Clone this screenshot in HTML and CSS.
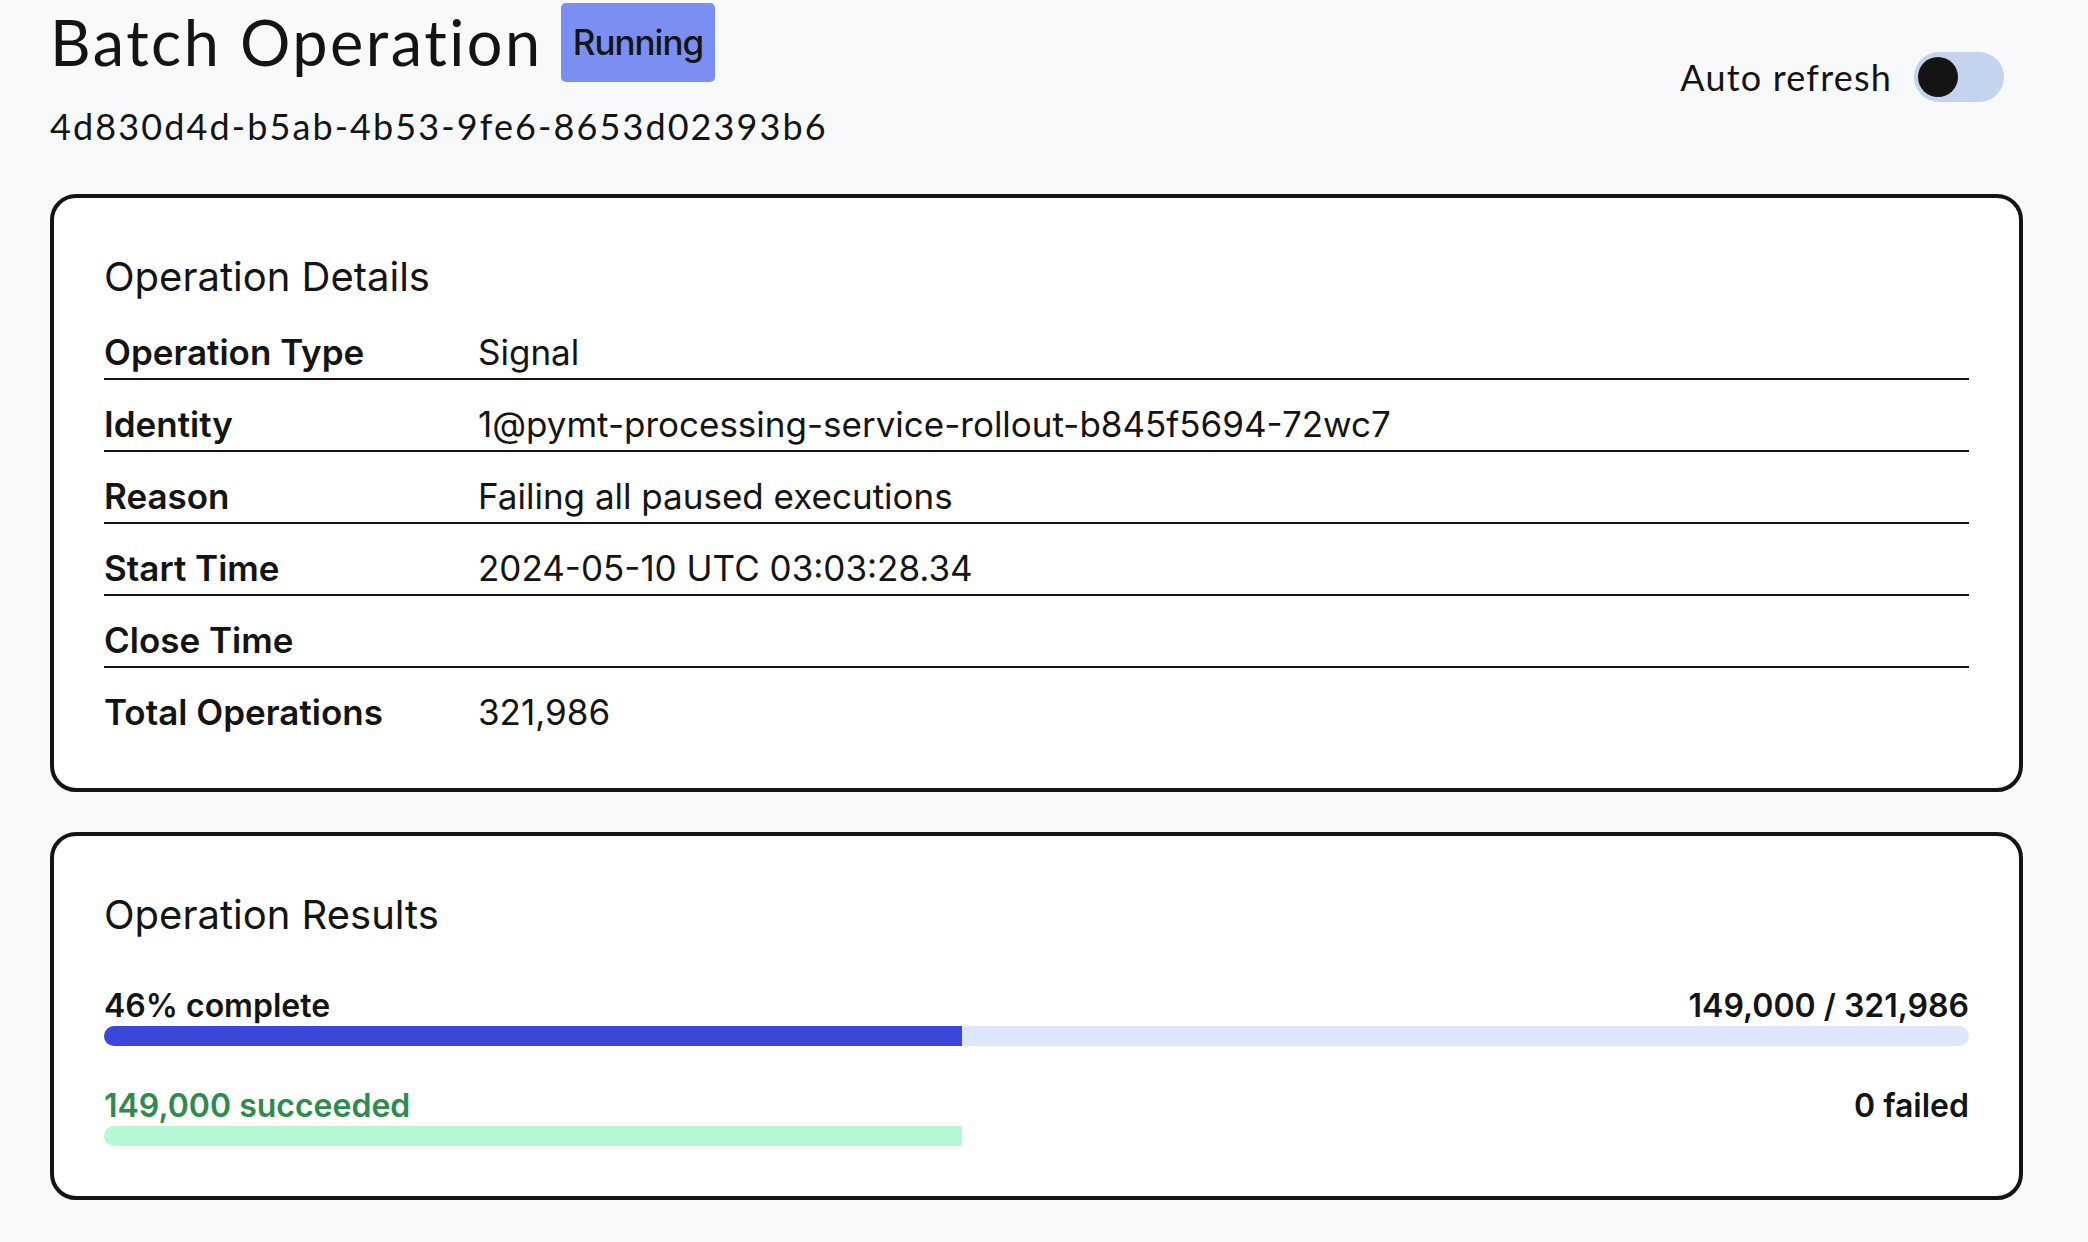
FILE: index.html
```html
<!DOCTYPE html>
<html lang="en">
<head>
<meta charset="utf-8">
<title>Batch Operation</title>
<link rel="stylesheet" href="styles.css">
</head>
<body>
<div class="page">
  <header class="header">
    <div class="header-main">
      <div class="title-row">
        <h1 class="title">Batch Operation</h1>
        <span class="badge">Running</span>
      </div>
      <div class="op-id">4d830d4d-b5ab-4b53-9fe6-8653d02393b6</div>
    </div>
    <div class="refresh">
      <span class="refresh-label">Auto refresh</span>
      <span class="toggle" role="switch" aria-checked="false"><span class="knob"></span></span>
    </div>
  </header>

  <section class="card">
    <h2 class="card-title">Operation Details</h2>
    <div class="details">
      <div class="row"><div class="key">Operation Type</div><div class="val">Signal</div></div>
      <div class="row"><div class="key">Identity</div><div class="val">1@pymt-processing-service-rollout-b845f5694-72wc7</div></div>
      <div class="row"><div class="key">Reason</div><div class="val">Failing all paused executions</div></div>
      <div class="row"><div class="key">Start Time</div><div class="val">2024-05-10 UTC 03:03:28.34</div></div>
      <div class="row"><div class="key">Close Time</div><div class="val"></div></div>
      <div class="row last"><div class="key">Total Operations</div><div class="val">321,986</div></div>
    </div>
  </section>

  <section class="card">
    <h2 class="card-title">Operation Results</h2>
    <div class="results">
      <div class="group">
        <div class="labels"><span>46% complete</span><span>149,000 / 321,986</span></div>
        <div class="bar track"><div class="fill blue" style="width: 46%"></div></div>
      </div>
      <div class="group">
        <div class="labels"><span class="ok">149,000 succeeded</span><span>0 failed</span></div>
        <div class="bar"><div class="fill green" style="width: 46%"></div></div>
      </div>
    </div>
  </section>
</div>
</body>
</html>
```

FILE: styles.css
```css
* { box-sizing: border-box; }
html, body { margin: 0; padding: 0; }
body {
  background: #f8f9fb;
  color: #141414;
  font-family: Inter, "Noto Sans", sans-serif;
}
.page {
  padding: 0 65px 0 50px;
}
.header {
  display: flex;
  justify-content: space-between;
  align-items: center;
  margin-bottom: 41px;
}
.title-row {
  display: flex;
  align-items: center;
  gap: 18px;
}
.title {
  margin: 0;
  font-family: Lato, "Open Sans", sans-serif;
  font-weight: 400;
  font-size: 63px;
  line-height: 84px;
  letter-spacing: 2.5px;
}
.badge {
  background: #7a8ff1;
  border-radius: 5px;
  padding: 12px 12px 13px;
  font-family: Inter, sans-serif;
  font-weight: 500;
  font-size: 35px;
  line-height: 54px;
  letter-spacing: -1px;
  color: #141414;
}
.op-id {
  margin-top: 15px;
  font-family: Lato, "Open Sans", sans-serif;
  font-size: 36px;
  line-height: 54px;
  letter-spacing: 2.1px;
}
.refresh {
  display: flex;
  align-items: center;
  gap: 22px;
  padding-right: 19px;
}
.refresh-label {
  font-family: Lato, "Open Sans", sans-serif;
  font-size: 36px;
  line-height: 54px;
  letter-spacing: 1.2px;
}
.toggle {
  display: flex;
  align-items: center;
  width: 90px;
  height: 50px;
  border-radius: 25px;
  background: #c4d4ee;
  padding-left: 4px;
}
.knob {
  width: 40px;
  height: 40px;
  border-radius: 50%;
  background: #141414;
}
.card {
  background: #ffffff;
  border: 4px solid #141414;
  border-radius: 26px;
  padding: 48px 50px 50px;
  margin-bottom: 40px;
}
.card-title {
  margin: 0;
  font-weight: 400;
  font-size: 40px;
  line-height: 62px;
}
.row {
  display: grid;
  grid-template-columns: 374px 1fr;
  padding-top: 18px;
  border-bottom: 2px solid #141414;
  font-size: 35px;
  line-height: 52px;
  min-height: 72px;
}
.row.last {
  border-bottom: none;
  min-height: 70px;
}
.key { font-weight: 600; }
.val { font-weight: 400; }
.results {
  display: flex;
  flex-direction: column;
  gap: 40px;
  padding-top: 40px;
}
.labels {
  display: flex;
  justify-content: space-between;
  font-size: 32px;
  line-height: 40px;
  font-weight: 600;
}
.ok { color: #2f8a4e; }
.bar {
  height: 20px;
  border-radius: 10px;
}
.bar.track { background: #dde6fc; }
.fill {
  height: 20px;
  border-radius: 10px 0 0 10px;
}
.fill.blue { background: #3a47d9; }
.fill.green { background: #b5f8d6; }
```
